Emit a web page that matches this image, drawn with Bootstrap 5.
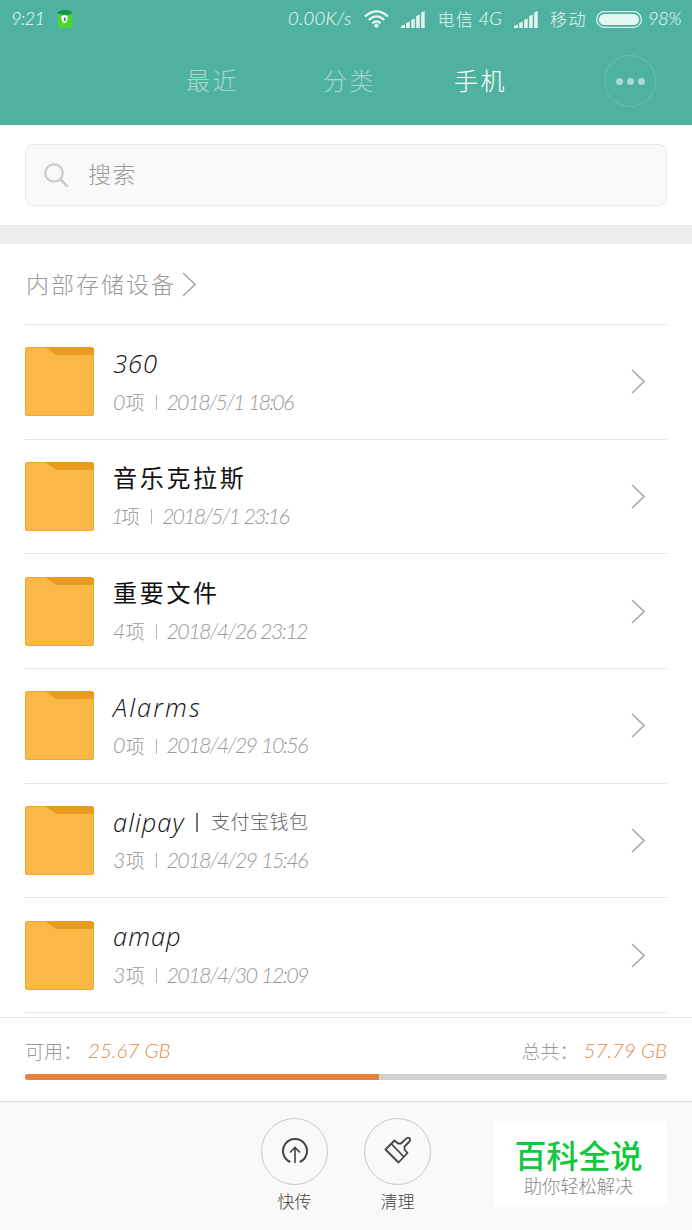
<!DOCTYPE html>
<html lang="zh-CN">
<head>
<meta charset="utf-8">
<meta name="viewport" content="width=device-width, initial-scale=1">
<title>文件管理</title>
<link href="https://cdn.jsdelivr.net/npm/bootstrap@5.3.0/dist/css/bootstrap.min.css" rel="stylesheet">
<style>
body{font-family:Lato,"Noto Sans CJK SC",sans-serif;font-weight:300;line-height:1;height:1230px;overflow:hidden;background:#fff;color:#111}
svg{display:block;flex:none}
.latin{font-style:italic;white-space:nowrap}
.zh{font-family:"Noto Sans CJK SC",sans-serif;font-style:normal;white-space:nowrap}
.topbar{background:#4fb2a0;height:125px;color:#e4f6f1}
.status{height:38px;padding:0 11px;font-size:19px}
.status .zh{font-size:17px;letter-spacing:1.5px;margin-top:-2px}
.status .latin{margin-top:-1px;font-size:18.500px;color:#f0fbf8}
.clock{letter-spacing:-.8px;width:46px}
.tabs-row{height:86px;padding:0 36px 0 186px;font-size:24px}
.tab-item{width:134.500px;letter-spacing:2.5px;color:#a5d8cd;margin-top:-2px}
.tab-item.current{color:#fff}
.more{width:52px;height:52px;border:1.5px solid #6abfaf;gap:4px}
.more i{width:7px;height:7px;border-radius:50%;background:#a8dcd1}
.search-wrap{height:100px;padding:19px 25px;}
.search-box{height:62px;border:1px solid #e9e9e9;border-radius:8px;background:#f9f9f9;color:#999;font-size:23px;padding-left:18px;gap:19px}
.band{height:19px;background:#ededed}
.crumb{height:80px;color:#999;font-size:23px;letter-spacing:2px;gap:6px;padding-left:1px}
.px{padding:0 25px}
.entry{height:114.65px;border-top:1px solid #e4e4e4;padding-right:22px}
.entry-text{margin-left:19px;padding-top:4px}
.entry-name{font-size:25.5px;height:37px;font-family:"Open Sans",sans-serif;letter-spacing:1px}
.entry-name .wide{letter-spacing:2.1px}
.entry-name .zh{font-size:24px;letter-spacing:2.7px;font-weight:400;margin-top:-2px}
.entry-name .alias{font-size:19px;letter-spacing:.5px;color:#666;font-weight:300;margin-top:-4px}
.entry-meta{font-size:21.5px;color:#999;height:40px}
.entry-meta .zh{font-size:19px;margin-top:-2px}
.date{letter-spacing:-1.65px;word-spacing:1px}
.date.short{letter-spacing:-1.9px}
.bar{width:1px;height:15px;background:#b5b5b5;margin:0 10px 0 11px}
.bar.tall{width:1.5px;height:19px;background:#777;margin:0 13px 0 12px}
.storage{height:84px;border-top:1px solid #e6e6e6;background:#fff}
.list-end{height:5px;border-top:1px solid #e4e4e4}
.storage-text{height:56px;padding-top:9px;font-size:20.5px;color:#e08a4b}
.storage-text .zh{font-size:19px;color:#999}
.usage{height:6px;border-radius:3px;background:#d2d2d2}
.usage .progress-bar{background:#e5833d}
.tools{height:129px;border-top:1px solid #dedede;background:#f9f9f9;padding:16px 25px 0 261px}
.tool{width:67px;margin-right:36px;font-size:17px;color:#444}
.tool .ring{width:67px;height:67px;border:1px solid #c9c9c9;margin-bottom:7px}
.logo-card{width:173px;height:84px;background:#fff;margin:3px 0 0 27px;padding-right:4px}
.logo-title{font-size:32px;line-height:32px;font-weight:500;color:#12c83c}
.logo-sub{font-size:18.3px;line-height:18px;color:#888;font-weight:300}
</style>
</head>
<body>
<svg width="0" height="0" class="position-absolute" aria-hidden="true">
  <symbol id="folder" viewBox="0 0 69 69"><rect width="69" height="69" rx="3" fill="#e99b1f"/><path d="M3 0H20L31 8H69V66Q69 69 66 69H3Q0 69 0 66V3Q0 0 3 0Z" fill="#fab947"/><path d="M.5 3Q.5.5 3 .5H66Q68.500.5 68.500 3V66Q68.500 68.500 66 68.500H3Q.5 68.500.5 66Z" fill="none" stroke="#e99b1f" stroke-opacity=".6"/></symbol>
  <symbol id="chev" viewBox="0 0 14 25"><path d="M1 1L13 12.500L1 24" fill="none" stroke="#aaa" stroke-width="1.700"/></symbol>
  <symbol id="signal" viewBox="0 0 24 17"><path d="M0 17V15L4 13.500V17ZM5.200 17V12L8.700 10.500V17ZM10.200 17V9L13.700 7.500V17ZM15.200 17V5L18.700 3.500V17ZM20.200 17V1.500L23.700 0V17Z" fill="#e4f6f1"/></symbol>
</svg>

<header class="topbar">
  <div class="status d-flex align-items-center">
    <span class="latin clock">9:21</span>
    <svg width="16" height="20" viewBox="0 0 16 20"><rect x="1" y="3" width="14" height="16" rx="1.500" fill="#4ed52f"/><path d="M1 3Q7-.5 14 2L15 5 10 6 1 5Z" fill="#16904e"/><path d="M4.500 7L7.500 6L10.500 7V10Q10 13 7.500 14.500Q5 13 4.500 10Z" fill="#fff"/><rect x="6.800" y="8.500" width="1.800" height="3.500" fill="#249536"/></svg>
    <span class="latin ms-auto" style="letter-spacing:.3px">0.00K/s</span>
    <svg width="25" height="18" viewBox="0 0 25 18" style="margin-left:12px"><g fill="none" stroke="#e4f6f1" stroke-width="2.300"><path d="M1 6.500Q12.500-3.800 24 6.500"/><path d="M4.700 10Q12.500 2.800 20.300 10"/><path d="M8.300 13.300Q12.500 9.500 16.700 13.300"/></g><circle cx="12.500" cy="15.700" r="2.100" fill="#e4f6f1"/></svg>
    <svg width="24" height="17" style="margin-left:12px"><use href="#signal"/></svg>
    <span class="zh" style="margin-left:13px">电信</span><span class="latin" style="margin-left:4px">4G</span>
    <svg width="24" height="17" style="margin-left:12px"><use href="#signal"/></svg>
    <span class="zh" style="margin-left:12px">移动</span>
    <svg width="46" height="17" viewBox="0 0 46 17" style="margin-left:9px"><rect x=".7" y=".7" width="44.600" height="15.600" rx="7.500" fill="none" stroke="#d9f1eb" stroke-width="1.300"/><rect x="3" y="3" width="40" height="11" rx="5.500" fill="#e4f6f1"/></svg>
    <span class="latin" style="margin-left:6px;letter-spacing:-.6px">98%</span>
  </div>
  <nav class="tabs-row d-flex align-items-center">
    <span class="zh tab-item" style="width:137px">最近</span><span class="zh tab-item" style="width:131px">分类</span><span class="zh tab-item current">手机</span>
    <span class="more rounded-circle ms-auto d-flex align-items-center justify-content-center"><i></i><i></i><i></i></span>
  </nav>
</header>

<section class="search-wrap">
  <div class="search-box d-flex align-items-center">
    <svg width="25" height="25" viewBox="0 0 25 25" fill="none" stroke="#ccc"><circle cx="10" cy="10" r="8.700" stroke-width="2.300"/><path d="M16 16L23.500 23.500" stroke-width="2.800"/></svg>
    <span class="zh" style="letter-spacing:1.5px;margin-top:-3px">搜索</span>
  </div>
</section>
<div class="band"></div>

<main class="px">
  <div class="crumb d-flex align-items-center"><span class="zh" style="margin-top:-2px">内部存储设备</span><svg width="14" height="25"><use href="#chev"/></svg></div>
  <div class="entry d-flex align-items-center"><svg width="69" height="69"><use href="#folder"/></svg>
    <div class="entry-text flex-grow-1"><div class="entry-name d-flex align-items-center"><span class="latin">360</span></div><div class="entry-meta d-flex align-items-center"><span class="latin">0</span><span class="zh">项</span><i class="bar"></i><span class="latin date short">2018/5/1 18:06</span></div></div><svg width="14" height="25"><use href="#chev"/></svg></div>
  <div class="entry d-flex align-items-center"><svg width="69" height="69"><use href="#folder"/></svg>
    <div class="entry-text flex-grow-1"><div class="entry-name d-flex align-items-center"><span class="zh">音乐克拉斯</span></div><div class="entry-meta d-flex align-items-center"><span class="latin" style="margin-left:-2px;letter-spacing:-2.5px">1</span><span class="zh">项</span><i class="bar"></i><span class="latin date short">2018/5/1 23:16</span></div></div><svg width="14" height="25"><use href="#chev"/></svg></div>
  <div class="entry d-flex align-items-center"><svg width="69" height="69"><use href="#folder"/></svg>
    <div class="entry-text flex-grow-1"><div class="entry-name d-flex align-items-center"><span class="zh">重要文件</span></div><div class="entry-meta d-flex align-items-center"><span class="latin">4</span><span class="zh">项</span><i class="bar"></i><span class="latin date">2018/4/26 23:12</span></div></div><svg width="14" height="25"><use href="#chev"/></svg></div>
  <div class="entry d-flex align-items-center"><svg width="69" height="69"><use href="#folder"/></svg>
    <div class="entry-text flex-grow-1"><div class="entry-name d-flex align-items-center"><span class="latin wide">Alarms</span></div><div class="entry-meta d-flex align-items-center"><span class="latin">0</span><span class="zh">项</span><i class="bar"></i><span class="latin date">2018/4/29 10:56</span></div></div><svg width="14" height="25"><use href="#chev"/></svg></div>
  <div class="entry d-flex align-items-center"><svg width="69" height="69"><use href="#folder"/></svg>
    <div class="entry-text flex-grow-1"><div class="entry-name d-flex align-items-center"><span class="latin">alipay</span><i class="bar tall"></i><span class="zh alias">支付宝钱包</span></div><div class="entry-meta d-flex align-items-center"><span class="latin">3</span><span class="zh">项</span><i class="bar"></i><span class="latin date">2018/4/29 15:46</span></div></div><svg width="14" height="25"><use href="#chev"/></svg></div>
  <div class="entry d-flex align-items-center"><svg width="69" height="69"><use href="#folder"/></svg>
    <div class="entry-text flex-grow-1"><div class="entry-name d-flex align-items-center"><span class="latin">amap</span></div><div class="entry-meta d-flex align-items-center"><span class="latin">3</span><span class="zh">项</span><i class="bar"></i><span class="latin date">2018/4/30 12:09</span></div></div><svg width="14" height="25"><use href="#chev"/></svg></div>
  <div class="list-end"></div>
</main>

<section class="storage px">
  <div class="storage-text d-flex align-items-center justify-content-between">
    <div class="d-flex align-items-center"><span class="zh">可用：</span><span class="latin" style="margin-left:6px">25.67 GB</span></div>
    <div class="d-flex align-items-center"><span class="zh">总共：</span><span class="latin" style="margin-left:5px">57.79 GB</span></div>
  </div>
  <div class="progress usage"><div class="progress-bar" style="width:55.1%"></div></div>
</section>

<footer class="tools d-flex">
  <div class="tool text-center"><div class="ring rounded-circle d-flex align-items-center justify-content-center"><svg width="28" height="28" viewBox="0 0 28 28" fill="none" stroke="#444"><path d="M9.300 25A12 12 0 1 1 18.700 25" stroke-width="2"/><path d="M14 26V11M9 15.500L14 10.500L19 15.500" stroke-width="1.600"/></svg></div><span class="zh">快传</span></div>
  <div class="tool text-center"><div class="ring rounded-circle d-flex align-items-center justify-content-center"><svg width="28" height="28" viewBox="0 0 28 28" fill="none" stroke="#444" stroke-width="1.800" stroke-linejoin="round"><path d="M1.500 12.500L10.500 3.500L14 6.500H17L22 1.800Q24-.2 25.500 1.300Q27 3 25 5L20.500 9.500V12.500L23.500 16L14.500 25.500Z"/><path d="M7.500 7L19.500 19.500"/></svg></div><span class="zh">清理</span></div>
  <div class="logo-card d-flex flex-column align-items-center"><span class="zh logo-title" style="margin-top:17px">百科全说</span><span class="zh logo-sub" style="margin-top:6px">助你轻松解决</span></div>
</footer>
<script src="https://cdn.jsdelivr.net/npm/bootstrap@5.3.0/dist/js/bootstrap.bundle.min.js"></script>
</body>
</html>
